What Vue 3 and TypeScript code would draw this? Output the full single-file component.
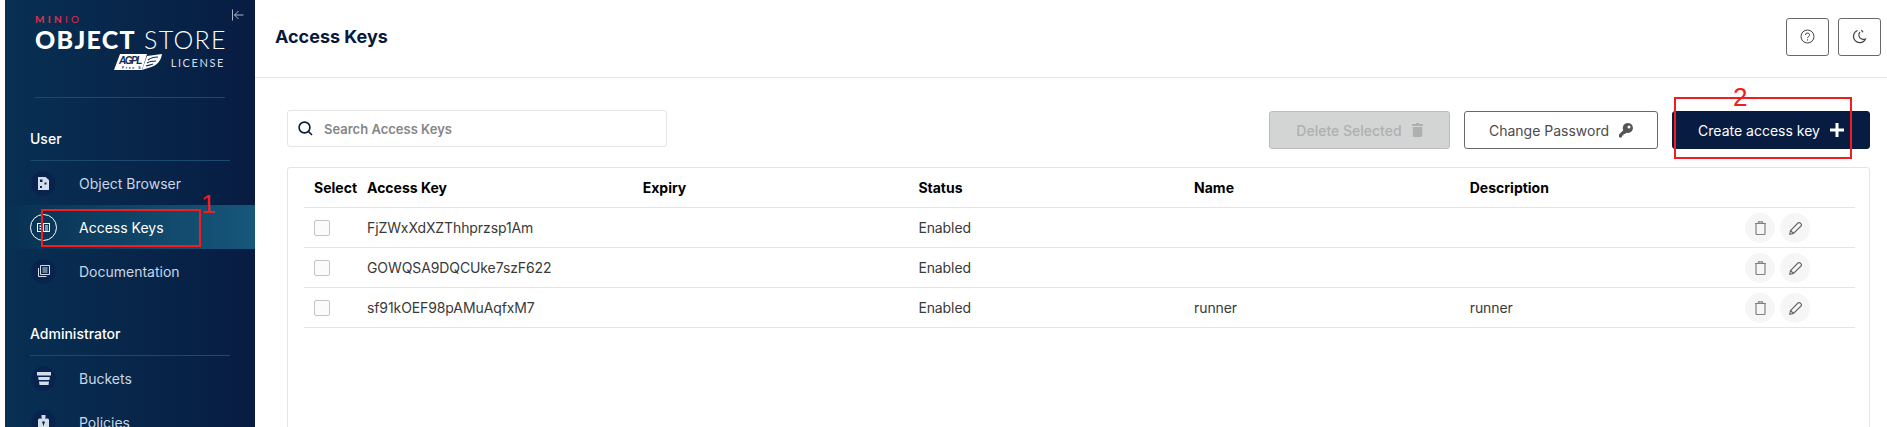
<script setup lang="ts">
interface AccessKey {
  id: string;
  status: string;
  name: string;
  description: string;
}

const keys: AccessKey[] = [
  { id: 'FjZWxXdXZThhprzsp1Am', status: 'Enabled', name: '', description: '' },
  { id: 'GOWQSA9DQCUke7szF622', status: 'Enabled', name: '', description: '' },
  { id: 'sf91kOEF98pAMuAqfxM7', status: 'Enabled', name: 'runner', description: 'runner' },
];
</script>

<template>
  <div class="page">
    <aside class="sidebar">
      <div class="brand">
        <svg class="collapse" width="14" height="14" viewBox="0 0 14 14" fill="none" stroke="#a9b8c9" stroke-width="1">
          <path d="M1.500 1.500v11M12.500 7H3.500M7.500 3l-4 4 4 4" />
        </svg>
        <div class="minio">MIN<span>IO</span></div>
        <div class="store"><b>OBJECT</b> STORE</div>
        <div class="license">
          <svg class="agpl" width="48" height="16" viewBox="0 0 48 16">
            <path d="M6 0h27l-5 16H0z" fill="#fff" />
            <text x="5" y="10" font-family="Liberation Sans" font-size="10" font-style="italic" font-weight="700" fill="#0c2a52" textLength="25">AGPL</text>
            <text x="8" y="14.500" font-family="Liberation Sans" font-size="3.500" font-weight="700" fill="#0c2a52">Free Software</text>
            <path d="M33 2l15-2c-1 6-4 12-14 14l-6 2z" fill="#fff" />
            <path d="M34 6c4-3 7-3 10-3M33 9c3-2 6-2 9-2M32 12c3-1 5-1 7-2" fill="none" stroke="#0c2a52" stroke-width="1.200" />
          </svg>
          <span>LICENSE</span>
        </div>
      </div>

      <div class="section">User</div>
      <nav>
        <a class="item">
          <span class="dot">
            <svg width="11" height="13" viewBox="0 0 11 13">
              <path fill-rule="evenodd" fill="#d4deea" d="M0 0h7.500L11 3v10H0zM2 2.500v2.500h2.500V2.500zM6.500 5.500v2h2v-2zM2 9v2h2V9z" />
            </svg>
          </span>
          Object Browser
        </a>
        <a class="item active">
          <span class="dot">
            <svg width="13" height="11" viewBox="0 0 13 11">
              <path fill-rule="evenodd" fill="#fff" d="M0 1h13v9H0zM1 2v7h5V2zM7 2v7h5V2z" />
              <path fill="#fff" d="M2.500 3.500h2v1.500h-2zM2.500 6h2v1.500h-2zM8 3.500h3v1h-3zM8 5.500h3v1h-3zM8 7.500h3v1h-3z" />
            </svg>
          </span>
          Access Keys
        </a>
        <a class="item">
          <span class="dot">
            <svg width="13" height="13" viewBox="0 0 13 13" fill="none" stroke="#d4deea" stroke-width="1">
              <path d="M3.500 .5h9v9h-9zM5.500 3h5M5.500 5h5M5.500 7h5M1.500 3v8.500h8" />
            </svg>
          </span>
          Documentation
        </a>
      </nav>

      <div class="section">Administrator</div>
      <nav>
        <a class="item">
          <span class="dot">
            <svg width="14" height="13" viewBox="0 0 14 13" fill="#d4deea">
              <path d="M0 0h14v3.500H0zM1.200 5h11.600l-.4 3H1.600zM2 9.500h10l-.5 3.500h-9z" />
            </svg>
          </span>
          Buckets
        </a>
        <a class="item">
          <span class="dot">
            <svg width="11" height="14" viewBox="0 0 11 14">
              <path fill="#d4deea" d="M3.500 0h4v2.500l-.8 1h-2.400l-.8-1zM1.500 3.500h8a1.500 1.500 0 0 1 1.500 1.500v7.500a1.500 1.500 0 0 1-1.500 1.500h-8A1.500 1.500 0 0 1 0 12.500V5a1.500 1.500 0 0 1 1.500-1.500z" />
              <circle cx="5.500" cy="7.500" r="1.300" fill="#06264d" />
              <path d="M5 8h1v2.500H5z" fill="#06264d" />
            </svg>
          </span>
          Policies
        </a>
      </nav>
    </aside>

    <main class="main">
      <header class="topbar">
        <h1>Access Keys</h1>
        <div class="top-actions">
          <button class="square">
            <svg width="15" height="15" viewBox="0 0 15 15" fill="none" stroke="#444" stroke-width="1">
              <circle cx="7.500" cy="7.500" r="6.500" />
              <path d="M5.500 6a2 2 0 1 1 3 1.700c-.7.400-1 .8-1 1.500M7.500 10.300v1.200" />
            </svg>
          </button>
          <button class="square">
            <svg width="15" height="15" viewBox="0 0 15 15" fill="none" stroke="#444" stroke-width="1.200">
              <path d="M5.500 1.500a6.300 6.300 0 1 0 8 8.500c-3.500 1-6-.5-6.500-3-.3-1.500 0-3 1-4" />
              <path d="M9.500 .8c.3 1 .5 1.800 1.700 2.300" />
            </svg>
          </button>
        </div>
      </header>

      <div class="content">
        <div class="toolbar">
          <label class="search">
            <svg width="15" height="15" viewBox="0 0 15 15" fill="none" stroke="#07193e" stroke-width="1.600">
              <circle cx="6.500" cy="6.500" r="5.400" />
              <path d="M10.500 10.500l3.500 3.500" />
            </svg>
            <span>Search Access Keys</span>
          </label>
          <div class="buttons">
            <button class="btn disabled">
              Delete Selected
              <svg width="11" height="14" viewBox="0 0 11 14" fill="#aeb0b0">
                <path d="M4 0h3v1h4v2H0V1h4zM.8 4h9.400v8.500a1.500 1.500 0 0 1-1.500 1.500H2.300a1.500 1.500 0 0 1-1.500-1.500z" />
              </svg>
            </button>
            <button class="btn outline">
              Change Password
              <svg width="14" height="15" viewBox="0 0 14 15" fill="#555">
                <path fill-rule="evenodd" d="M9 0a5 5 0 1 1-1.800 9.700L6 11H4.500v1.500H3V14l-.5.500H.5L0 14v-2.500l4.300-4.300A5 5 0 0 1 9 0zm1 2.500a1.500 1.500 0 1 0 0 3 1.500 1.500 0 0 0 0-3z" />
              </svg>
            </button>
            <button class="btn primary">
              Create access key
              <svg width="14" height="14" viewBox="0 0 14 14" fill="#fff">
                <path d="M5.500 0h3v5.500H14v3H8.500V14h-3V8.500H0v-3h5.500z" />
              </svg>
            </button>
          </div>
        </div>

        <div class="table">
          <div class="row head">
            <div class="col-select">Select</div>
            <div class="col">Access Key</div>
            <div class="col">Expiry</div>
            <div class="col">Status</div>
            <div class="col">Name</div>
            <div class="col">Description</div>
          </div>
          <div v-for="key in keys" :key="key.id" class="row">
            <div class="col-select"><span class="check"></span></div>
            <div class="col">{{ key.id }}</div>
            <div class="col"></div>
            <div class="col">{{ key.status }}</div>
            <div class="col">{{ key.name }}</div>
            <div class="col">{{ key.description }}</div>
            <div class="row-actions">
              <span class="round">
                <svg width="11" height="14" viewBox="0 0 11 14" fill="none" stroke="#808080" stroke-width="1.200">
                  <path d="M1 2.500h9v10a1 1 0 0 1-1 1H2a1 1 0 0 1-1-1zM0 2.500h11M3.500 2.500V.8h4v1.700" />
                </svg>
              </span>
              <span class="round">
                <svg width="13" height="13" viewBox="0 0 13 13" fill="none" stroke="#666" stroke-width="1.100">
                  <path d="M.8 12.200l.7-3.700L9 1a1.500 1.500 0 0 1 2.100 0l.9.900a1.500 1.500 0 0 1 0 2.100l-7.500 7.500zM1.500 8.500l3 3" />
                </svg>
              </span>
            </div>
          </div>
        </div>
      </div>
    </main>

    <!-- annotations drawn over the screenshot -->
    <div class="mark mark-1"></div>
    <span class="mark-num num-1">1</span>
    <div class="mark mark-2"></div>
    <span class="mark-num num-2">2</span>
  </div>
</template>

<style>
html,
body {
  margin: 0;
  background: #fff;
  overflow: hidden;
}
</style>

<style scoped>
.page {
  position: relative;
  display: flex;
  width: 1887px;
  height: 427px;
  overflow: hidden;
  background: #fff;
  font-family: Inter, "Liberation Sans", sans-serif;
}

.sidebar {
  flex: none;
  width: 250px;
  margin-left: 5px;
  background: linear-gradient(90deg, #073052 0%, #081c42 100%);
  color: #fff;
}

.brand {
  position: relative;
  height: 97px;
  margin: 0 30px;
  border-bottom: 1px solid #1c4a6e;
  font-family: Lato, "Liberation Sans", sans-serif;
}

.collapse {
  position: absolute;
  top: 8px;
  right: -20px;
}

.minio {
  padding-top: 13px;
  color: #d5304e;
  font-size: 10px;
  line-height: 12px;
  font-weight: 900;
  letter-spacing: 3.2px;
}

.minio span {
  font-weight: 400;
}

.store {
  margin-top: 1px;
  font-size: 25px;
  line-height: 27px;
  font-weight: 300;
  letter-spacing: 1.3px;
  white-space: nowrap;
}

.store b {
  font-weight: 900;
}

.license {
  display: flex;
  align-items: center;
  justify-content: flex-end;
  gap: 9px;
  margin-top: 1px;
  font-size: 11px;
  letter-spacing: 1.6px;
  color: #d5dde6;
}

.agpl {
  overflow: visible;
}

.section {
  margin: 31px 25px 0;
  padding-bottom: 11px;
  border-bottom: 1px solid #1c4a6e;
  font-size: 14px;
  line-height: 20px;
  font-weight: 500;
}

nav {
  display: flex;
  flex-direction: column;
}

.item {
  display: flex;
  align-items: center;
  gap: 22px;
  height: 44px;
  padding-left: 25px;
  color: #c9d6e6;
  font-size: 14px;
}

.item.active {
  color: #fff;
  background: linear-gradient(90deg, #073052 0%, #16577a 100%);
}

.dot {
  display: flex;
  align-items: center;
  justify-content: center;
  width: 27px;
  height: 27px;
  border-radius: 50%;
  background: #08244c;
  border: 1px solid #0c2c56;
  box-sizing: border-box;
}

.item.active .dot {
  background: transparent;
  border-color: #fff;
}

.main {
  flex: 1;
  min-width: 0;
}

.topbar {
  display: flex;
  align-items: center;
  justify-content: space-between;
  box-sizing: border-box;
  height: 78px;
  padding: 0 6px 4px 20px;
  border-bottom: 1px solid #e5e5e5;
}

h1 {
  margin: 0;
  font-size: 18px;
  font-weight: 700;
  color: #07193e;
}

.top-actions {
  display: flex;
  gap: 9px;
}

.square {
  display: flex;
  align-items: center;
  justify-content: center;
  width: 43px;
  height: 38px;
  padding: 0;
  border: 1px solid #696969;
  border-radius: 3px;
  background: #fff;
}

.content {
  padding: 32px 17px 0 32px;
}

.toolbar {
  display: flex;
  align-items: flex-start;
  justify-content: space-between;
}

.search {
  display: flex;
  align-items: center;
  gap: 11px;
  box-sizing: border-box;
  width: 380px;
  height: 37px;
  padding-left: 10px;
  border: 1px solid #e5e5e5;
  border-radius: 3px;
  color: #858585;
  font-size: 13px;
  font-weight: 600;
}

.buttons {
  display: flex;
  gap: 14px;
  margin-top: 1px;
}

.btn {
  display: flex;
  align-items: center;
  justify-content: center;
  gap: 10px;
  box-sizing: border-box;
  height: 38px;
  border-radius: 3px;
  font-family: inherit;
  font-size: 14px;
}

.btn.disabled {
  width: 181px;
  border: 1px solid #bbbdbd;
  background: #d3d5d5;
  color: #aeb0b0;
  font-weight: 500;
}

.btn.outline {
  width: 194px;
  border: 1px solid #696969;
  background: #fff;
  color: #4b4b4b;
}

.btn.primary {
  width: 198px;
  border: 1px solid #081c42;
  background: #081c42;
  color: #fff;
}

.table {
  box-sizing: border-box;
  height: 300px;
  margin-top: 18px;
  padding: 0 14px 0 16px;
  border: 1px solid #e5e5e5;
  border-radius: 3px;
}

.row {
  position: relative;
  display: flex;
  align-items: center;
  box-sizing: border-box;
  height: 40px;
  border-bottom: 1px solid #e5e5e5;
  color: #393939;
  font-size: 14px;
  letter-spacing: -0.1px;
}

.row.head {
  color: #000;
  font-weight: 700;
  letter-spacing: 0;
}

.col-select {
  flex: none;
  width: 63px;
  padding-left: 10px;
  box-sizing: border-box;
  display: flex;
  align-items: center;
}

.col {
  flex: none;
  width: 275.7px;
  white-space: nowrap;
}

.check {
  box-sizing: border-box;
  width: 16px;
  height: 16px;
  border: 1px solid #c4c4c4;
  border-radius: 2px;
  background: #fbfbfb;
}

.row-actions {
  position: absolute;
  top: 5px;
  left: 1441px;
  display: flex;
  gap: 5px;
}

.round {
  display: flex;
  align-items: center;
  justify-content: center;
  width: 30px;
  height: 30px;
  border-radius: 50%;
  background: #f6f6f6;
}

.mark {
  position: absolute;
  box-sizing: border-box;
  border: 2px solid #f41c1c;
  pointer-events: none;
}

.mark-1 {
  left: 41px;
  top: 209px;
  width: 160px;
  height: 38px;
}

.mark-2 {
  left: 1674px;
  top: 97px;
  width: 178px;
  height: 62px;
}

.mark-num {
  position: absolute;
  color: #f41c1c;
  font-family: "Liberation Sans", sans-serif;
  font-size: 26px;
  line-height: 26px;
}

.num-1 {
  left: 201px;
  top: 191px;
}

.num-2 {
  left: 1733px;
  top: 84px;
}
</style>
